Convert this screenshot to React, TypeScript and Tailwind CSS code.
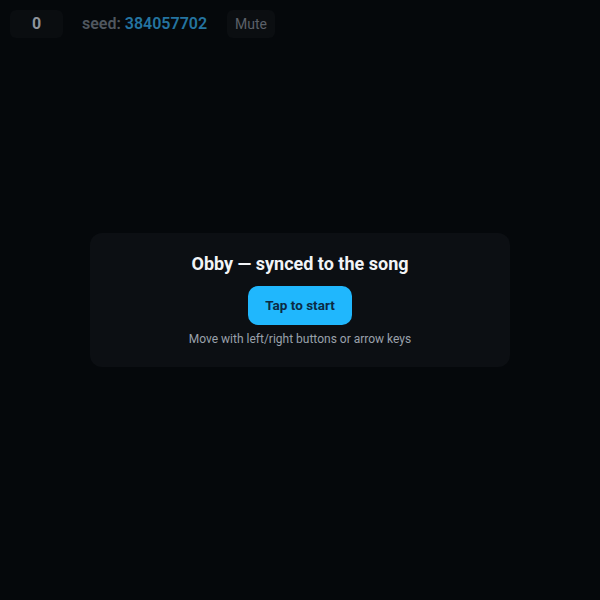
import React from 'react';

export default function App() {
  return (
    <div className="relative h-[600px] w-[600px] overflow-hidden bg-[#05080b] font-['Roboto',sans-serif]">
      {/* top bar */}
      <div className="flex items-center gap-[19px] px-[10px] pt-[10px]">
        <div className="flex h-[28px] w-[53px] items-center justify-center rounded-md bg-[#0a0d10] text-[16px] font-bold text-[#8e939a]">
          0
        </div>
        <div className="text-[16px] font-semibold text-[#50575f]">
          seed: <span className="text-[#2474a0]">384057702</span>
        </div>
        <button className="ml-[1px] flex h-[28px] items-center rounded-md bg-[#0b0e11] px-[8px] text-[14px] text-[#5b6068]">
          Mute
        </button>
      </div>

      {/* start overlay */}
      <div className="absolute inset-0 flex items-center justify-center">
        <div className="flex w-[420px] flex-col items-center rounded-xl bg-[#0c0f13] pb-[20px] pt-[17px]">
          <h1 className="text-[18px] font-bold leading-[28px] text-[#f2f4f7]">Obby — synced to the song</h1>
          <button className="mt-[8px] h-[39px] w-[104px] rounded-[10px] bg-[#20b7fd] text-[13.5px] font-bold text-[#0b2a44]">
            Tap to start
          </button>
          <p className="mt-[6px] text-[12px] leading-[16px] text-[#9aa1ab]">Move with left/right buttons or arrow keys</p>
        </div>
      </div>
    </div>
  );
}
